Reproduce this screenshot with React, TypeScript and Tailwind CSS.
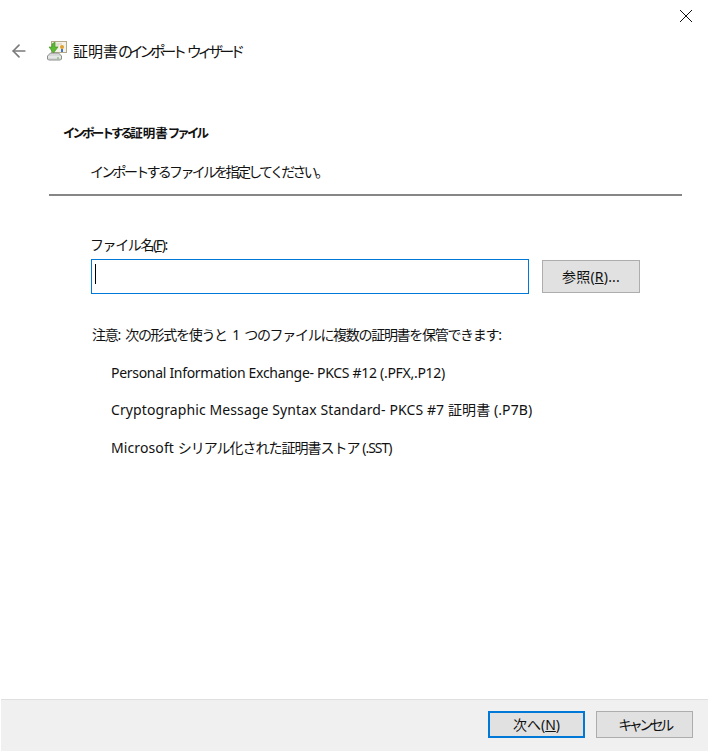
import { ArrowLeft } from 'lucide-react'

const font = { fontFamily: '"Noto Sans", "Noto Sans CJK JP", sans-serif' }

function CertIcon() {
  return (
    <svg width="22" height="22" viewBox="0 0 22 22" className="shrink-0">
      <rect x="5.5" y="1.5" width="15" height="11" fill="#f4f1e6" stroke="#b5a98c" />
      <path d="M8 4h8M8 6h5" stroke="#d6cfba" />
      <circle cx="16" cy="7" r="2" fill="#e0a030" />
      <path d="M15 9h2v3h-2z" fill="#3f74c4" />
      <path d="M1.5 16l3-3h8l3 3v3l-1 1H2.5l-1-1z" fill="#d5d8d6" stroke="#8b8f8c" />
      <path d="M2 17h13" stroke="#f5f5f5" />
      <path d="M9 2v5h3l-4.500 6-4.500-6h3V4z" fill="#5dbb33" stroke="#3b8f1f" strokeWidth="0.6" />
      <circle cx="12" cy="18" r="0.8" fill="#4caf30" />
    </svg>
  )
}

function Button({ children, primary }: { children: React.ReactNode; primary?: boolean }) {
  return (
    <button
      className={
        primary
          ? 'w-[97px] h-[27px] bg-[#e1e1e1] border-2 border-[#0078d7] text-[14px] text-[#111] flex items-center justify-center'
          : 'w-[97px] h-[27px] bg-[#e1e1e1] border border-[#adadad] text-[14px] text-[#111] flex items-center justify-center'
      }
    >
      {children}
    </button>
  )
}

export default function App() {
  return (
    <div style={font} className="w-[708px] h-[751px] bg-white flex flex-col text-[14px] leading-[20px] text-[#111] overflow-hidden">
      <div className="h-[30px] flex justify-end items-start pt-[9px] pr-[15px]">
        <svg width="14" height="14" viewBox="0 0 14 14">
          <path d="M1 1l12 12M13 1L1 13" stroke="#111" strokeWidth="1" fill="none" />
        </svg>
      </div>

      <div className="h-[42px] flex items-center pl-[9px]">
        <ArrowLeft size={20} strokeWidth={2} className="text-[#7a7a7a]" />
        <div className="ml-[17px]"><CertIcon /></div>
        <span className="ml-[5px] text-[15px]">
          証明書<span className="tracking-[-4.200px]">のインポート</span> <span className="tracking-[-4.200px]">ウィザード</span>
        </span>
      </div>

      <div className="pl-[63px] mt-[52px] font-bold text-[12.500px]">
        <span className="tracking-[-2.900px]">インポートする</span>証明書<span className="tracking-[-2.900px]">ファイル</span>
      </div>
      <div className="pl-[90px] mt-[18px] text-[14px] tracking-[-2.700px]">インポートするファイルを指定してください。</div>
      <div className="ml-[49px] mr-[26px] mt-[12px] h-[2px] bg-[#868686]" />

      <div className="pl-[90px] mt-[39px] tracking-[-1.400px]">
        ファイル名(<span className="underline">F</span>):
      </div>
      <div className="pl-[91px] mt-[4px] flex items-center">
        <div className="w-[438px] h-[35px] border border-[#0078d7] pl-[3px] flex items-center">
          <div className="w-px h-[20px] bg-black mb-[6px]" />
        </div>
        <button className="ml-[13px] w-[98px] h-[33px] bg-[#e1e1e1] border border-[#adadad] tracking-[0.200px] flex items-center justify-center">
          参照(<span className="underline">R</span>)...
        </button>
      </div>

      <div className="pl-[92px] mt-[31px] tracking-[-1.300px] [word-spacing:3px]">注意: 次の形式を使うと 1 つのファイルに複数の証明書を保管できます:</div>
      <div className="pl-[111px] mt-[18px] tracking-[-0.300px]">Personal Information Exchange- PKCS #12 (.PFX,.P12)</div>
      <div className="pl-[111px] mt-[17px] tracking-[0.100px]">Cryptographic Message Syntax Standard- PKCS #7 証明書 (.P7B)</div>
      <div className="pl-[111px] mt-[18px] tracking-[-1px]">
        <span className="tracking-[0.100px]">Microsoft </span>シリアル化された証明書ストア (.SST)
      </div>

      <div className="mt-auto ml-px h-[52px] bg-[#f0f0f0] border-t border-[#dfdfdf] flex items-start justify-end gap-[11px] pt-[11px] pr-[15px]">
        <Button primary>次へ(<span className="underline">N</span>)</Button>
        <Button><span className="tracking-[-3.500px]">キャンセル</span></Button>
      </div>
    </div>
  )
}
